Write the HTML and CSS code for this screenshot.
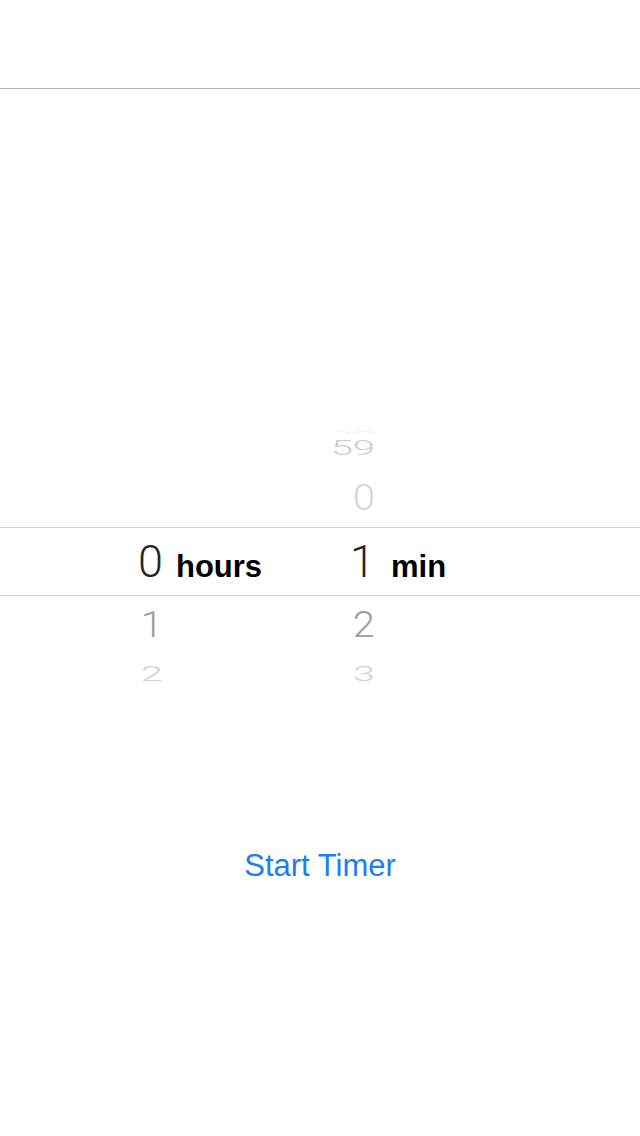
FILE: index.html
```html
<!DOCTYPE html>
<html>
<head>
<meta charset="utf-8">
<link rel="stylesheet" href="styles.css">
</head>
<body>
<div class="screen">
  <header class="navbar"></header>
  <div class="picker">
    <div class="row r-far">
      <span class="num"></span><span class="lbl"></span>
      <span class="num"><span class="d d-far top">58</span></span><span class="lbl"></span>
    </div>
    <div class="row r-mid">
      <span class="num"></span><span class="lbl"></span>
      <span class="num"><span class="d d-mid top">59</span></span><span class="lbl"></span>
    </div>
    <div class="row r-near">
      <span class="num"></span><span class="lbl"></span>
      <span class="num"><span class="d d-near top">0</span></span><span class="lbl"></span>
    </div>
    <div class="row r-sel">
      <span class="num"><span class="dsel">0</span></span><span class="lbl"><span class="unit">hours</span></span>
      <span class="num"><span class="dsel">1</span></span><span class="lbl"><span class="unit unit-min">min</span></span>
    </div>
    <div class="row r-near">
      <span class="num"><span class="d d-near bottom">1</span></span><span class="lbl"></span>
      <span class="num"><span class="d d-near bottom">2</span></span><span class="lbl"></span>
    </div>
    <div class="row r-mid">
      <span class="num"><span class="d d-mid bottom2">2</span></span><span class="lbl"></span>
      <span class="num"><span class="d d-mid bottom2">3</span></span><span class="lbl"></span>
    </div>
    <div class="row r-far">
      <span class="num"><span class="d d-far bottom3">3</span></span><span class="lbl"></span>
      <span class="num"><span class="d d-far bottom3">4</span></span><span class="lbl"></span>
    </div>
  </div>
  <div class="actions">
    <button class="start">Start Timer</button>
  </div>
</div>
</body>
</html>
```

FILE: styles.css
```css
html, body {
  margin: 0;
  padding: 0;
  background: #ffffff;
}
.screen {
  width: 640px;
  height: 1136px;
  overflow: hidden;
  background: #ffffff;
  font-family: "Liberation Sans", Arial, sans-serif;
}
.navbar {
  height: 88px;
  border-bottom: 1px solid #b2b2b2;
}
.picker {
  margin-top: 323px;
  display: flex;
  flex-direction: column;
}
.row {
  display: grid;
  grid-template-columns: 163px 145px 67px 1fr;
  align-items: center;
}
.row .num {
  text-align: right;
}
.row .num:first-child {
  padding-left: 100px;
}
.r-far { height: 18px; }
.r-mid { height: 39px; }
.r-near { height: 58px; }
.r-sel {
  height: 67px;
  border-top: 1px solid #cfcfcf;
  border-bottom: 1px solid #cfcfcf;
  align-items: baseline;
}
.d {
  display: inline-block;
  font-family: Roboto, "Liberation Sans", sans-serif;
  font-weight: 300;
  font-size: 40px;
  line-height: 40px;
}
.d-near { transform: scaleY(0.93); }
.d-near.top { color: #d6d6d6; }
.d-near.bottom { color: #a0a0a0; }
.d-mid { transform: scaleY(0.52); color: #cfcfcf; }
.d-mid.top { color: #cdcdcd; transform: translateY(-2px) scaleY(0.52); }
.d-mid.bottom2 { color: #d2d2d2; }
.d-far { transform: scaleY(0.14); color: #f3f3f3; }
.d-far.bottom3 { color: #fafafa; }
.dsel {
  display: inline-block;
  font-family: Roboto, "Liberation Sans", sans-serif;
  font-weight: 300;
  font-size: 45px;
  line-height: 67px;
  color: #262626;
}
.unit {
  display: inline-block;
  font-family: "Liberation Sans", Arial, sans-serif;
  font-weight: 700;
  font-size: 31px;
  color: #000000;
  padding-left: 13px;
}
.unit-min {
  padding-left: 16px;
}
.actions {
  margin-top: 137px;
  display: flex;
  justify-content: center;
}
.start {
  border: none;
  background: none;
  padding: 0;
  font-family: "Liberation Sans", Arial, sans-serif;
  font-size: 31px;
  line-height: 36px;
  color: #1a7ef5;
}
```
